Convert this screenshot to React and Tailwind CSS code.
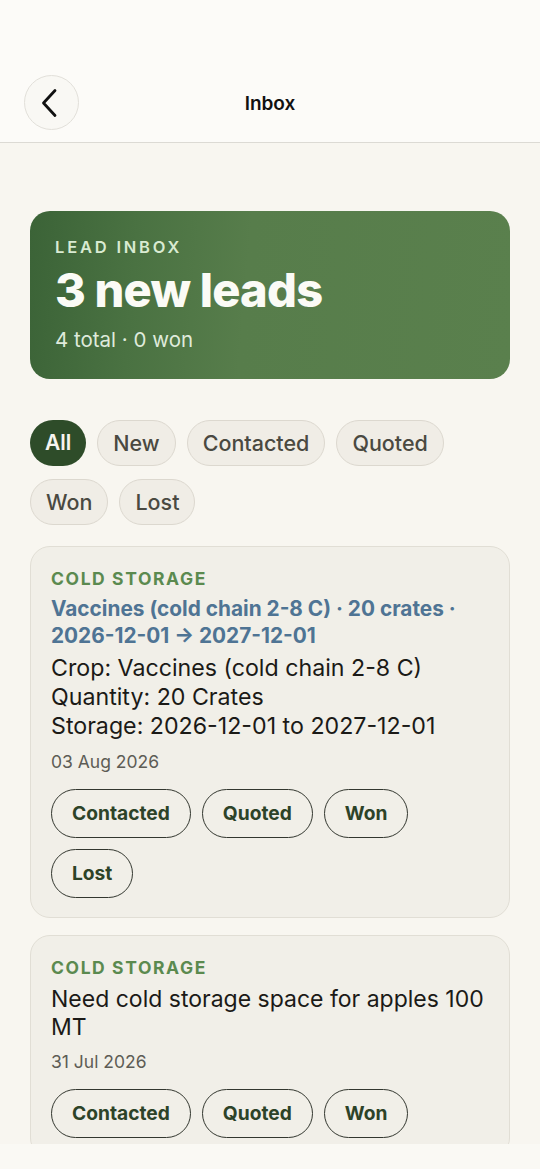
import React from 'react'

const filters = ["All", "New", "Contacted", "Quoted", "Won", "Lost"];

function ChevronLeft() {
  return (
    <svg width="22" height="30" viewBox="0 0 22 30" fill="none">
      <path d="M16 2.5 L4.5 15 L16 27.5" stroke="#111" strokeWidth="2.8" strokeLinecap="round" strokeLinejoin="round" />
    </svg>
  );
}

function ActionButton({ label }) {
  return (
    <button className="h-[49px] px-[20px] rounded-full border-[1.5px] border-[#33372f] text-[19.2px] font-bold text-[#2d4328] bg-transparent">
      {label}
    </button>
  );
}

function LeadCard({ title, titleBlue, lines, date, actions }) {
  return (
    <div className="rounded-[20px] border border-[#e1ded5] bg-[#f1efe8] px-[20px] pt-[21px] pb-[19px]">
      <div className="text-[17.5px] font-bold tracking-[1.6px] text-[#5b8a4f] leading-[22px]">COLD STORAGE</div>
      {titleBlue ? (
        <div className="mt-[5px] text-[20.8px] font-bold leading-[27px] text-[#4f7494]">{title}</div>
      ) : (
        <div className="mt-[6px] text-[23px] leading-[28px] text-[#1b1a17]">{title}</div>
      )}
      {lines && (
        <div className="mt-[5px] text-[23.2px] leading-[29px] text-[#1b1a17]">
          {lines.map((l) => (
            <div key={l}>{l}</div>
          ))}
        </div>
      )}
      <div className="mt-[10px] text-[17.5px] leading-[22px] text-[#5d5c55]">{date}</div>
      <div className="mt-[16px] flex flex-wrap gap-x-[11px] gap-y-[11px]">
        {actions.map((a) => (
          <ActionButton key={a} label={a} />
        ))}
      </div>
    </div>
  );
}

export default function App() {
  return (
    <div className="w-[540px] h-[1169px] flex flex-col bg-[#f8f6f0] overflow-hidden" style={{ fontFamily: 'Inter, "Noto Sans", sans-serif' }}>
      {/* header */}
      <div className="h-[143px] shrink-0 bg-[#fcfbf8] border-b border-[#dcdad4] flex items-end px-[24px] pb-[12px]">
        <div className="w-full flex items-center relative">
          <button className="w-[55px] h-[55px] rounded-full border border-[#e2e0da] bg-[#f9f8f4] flex items-center justify-center pr-[3px]">
            <ChevronLeft />
          </button>
          <div className="absolute left-0 right-0 top-[15px] text-center text-[19px] font-semibold text-[#111] pointer-events-none">Inbox</div>
        </div>
      </div>

      {/* content */}
      <div className="flex-1 overflow-hidden px-[30px] pt-[68px]">
        <div className="rounded-[20px] h-[168px] px-[25px] pt-[26px] bg-[linear-gradient(95deg,#3b6337_0%,#4a7242_22%,#577d4b_45%,#5a804d_100%)]">
          <div className="text-[16.5px] font-semibold tracking-[2.8px] text-[#d9ebd2] leading-[20px]">LEAD INBOX</div>
          <div className="mt-[6px] text-[47px] font-extrabold tracking-[-0.8px] text-[#fbfbf6] leading-[54px]">3 new leads</div>
          <div className="mt-[11px] text-[20.5px] text-[#dfeadb] leading-[24px]">4 total · 0 won</div>
        </div>

        <div className="mt-[41px] flex flex-wrap gap-x-[11px] gap-y-[13px]">
          {filters.map((f) =>
            f === "All" ? (
              <div key={f} className="h-[46px] px-[15px] rounded-full bg-[#2e4c29] text-[#f6f5ef] text-[21px] font-semibold flex items-center">{f}</div>
            ) : (
              <div key={f} className="h-[46px] px-[15px] rounded-full border border-[#dcd8cf] bg-[#f0ede6] text-[#4a4941] text-[21.5px] font-medium flex items-center">{f}</div>
            )
          )}
        </div>

        <div className="mt-[21px] flex flex-col gap-[17px]">
          <LeadCard
            titleBlue
            title="Vaccines (cold chain 2-8 C) · 20 crates · 2026-12-01 → 2027-12-01"
            lines={["Crop: Vaccines (cold chain 2-8 C)", "Quantity: 20 Crates", "Storage: 2026-12-01 to 2027-12-01"]}
            date="03 Aug 2026"
            actions={["Contacted", "Quoted", "Won", "Lost"]}
          />
          <LeadCard
            title="Need cold storage space for apples 100 MT"
            date="31 Jul 2026"
            actions={["Contacted", "Quoted", "Won"]}
          />
        </div>
      </div>

      <div className="h-[25px] shrink-0 bg-[#faf9f4]" />
    </div>
  );
}
